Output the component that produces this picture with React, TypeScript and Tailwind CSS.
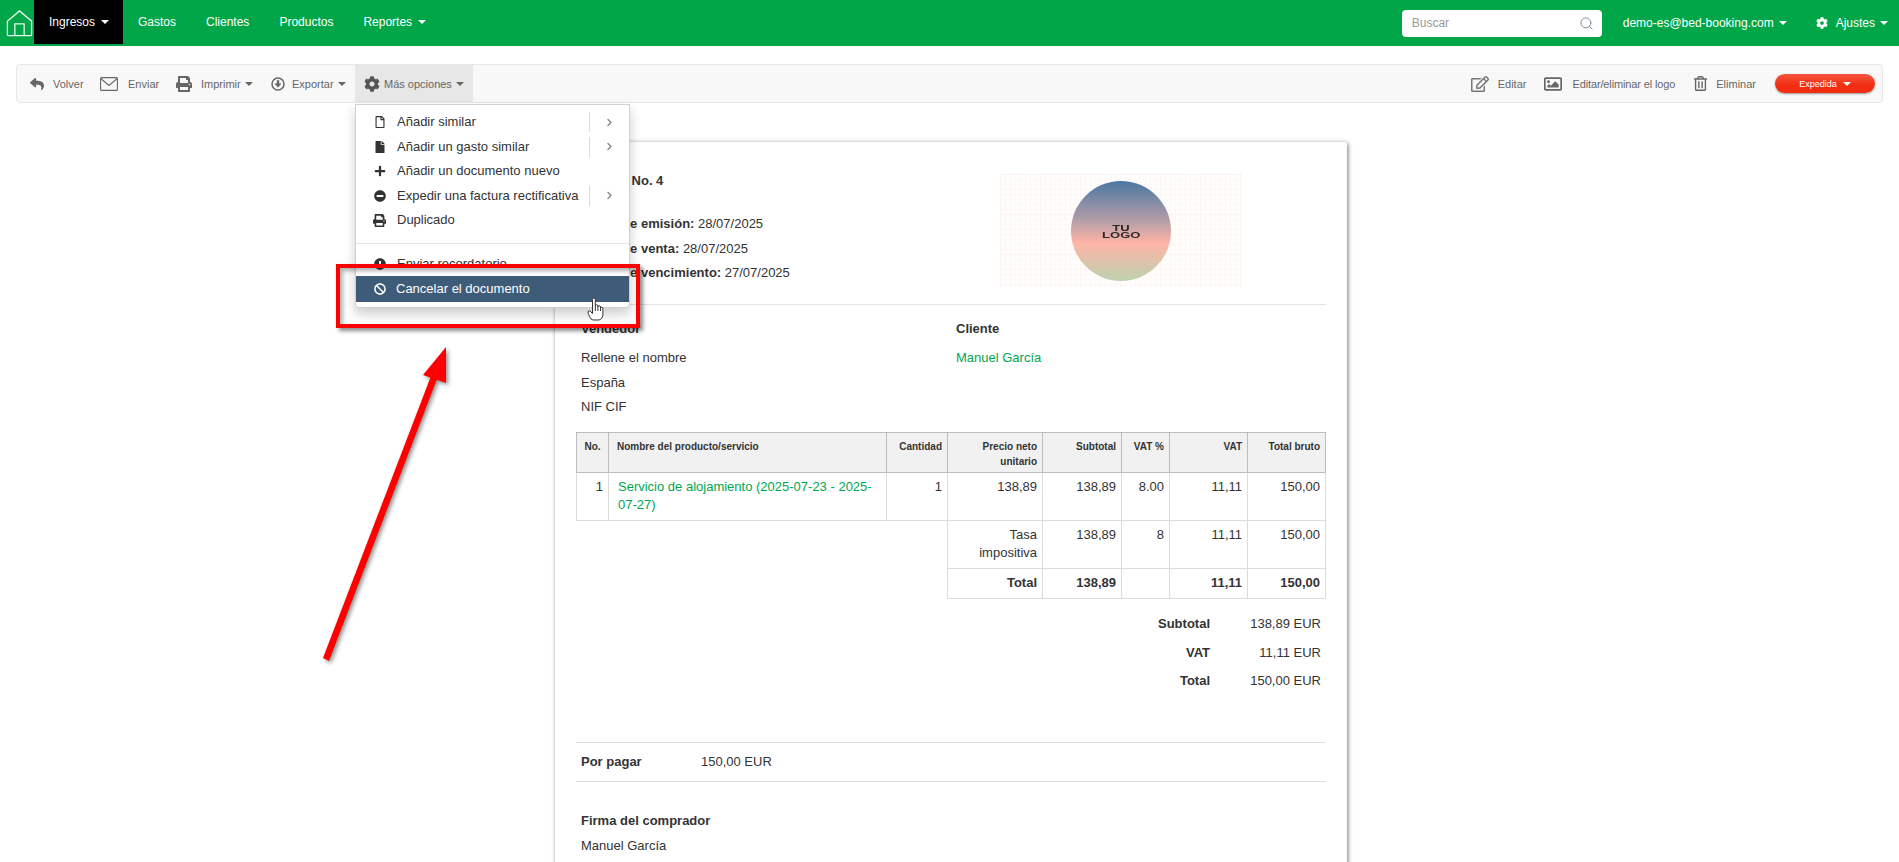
import React from "react";
import { FaReply, FaPrint, FaCog, FaRegFile, FaFile, FaPlus, FaMinusCircle, FaExclamationCircle, FaBan, FaRegEdit, FaRegImage, FaRegTrashAlt, FaChevronRight } from "react-icons/fa";
import { Search } from "lucide-react";

const Caret = ({ className = "" }: { className?: string }) => (
  <span className={"inline-block w-0 h-0 border-x-[4px] border-x-transparent border-t-[4px] " + className} />
);

const NavLink = ({ label, caret, active }: { label: string; caret?: boolean; active?: boolean }) => (
  <a className={"mb-[2px] flex h-[44px] items-center gap-[6px] px-[15px] " + (active ? "w-[89px] bg-black" : "")}>
    <span>{label}</span>
    {caret && <Caret className="border-t-white" />}
  </a>
);

const Tool = ({ icon, label, caret, w, active }: { icon: React.ReactNode; label: string; caret?: boolean; w: string; active?: boolean }) => (
  <div className={"flex h-full items-center " + w + (active ? " bg-[#e7e7e7]" : "")}>
    {icon}
    <span>{label}</span>
    {caret && <Caret className="ml-[4px] border-t-[#666]" />}
  </div>
);

const MenuRow = ({ icon, label, sub, active }: { icon: React.ReactNode; label: string; sub?: boolean; active?: boolean }) => (
  <div className={"flex items-center whitespace-nowrap " + (active ? "h-[26px] bg-[#3e5b78] text-white" : "h-[24.5px]")}>
    <span className="flex w-[41px] justify-end pr-[11px]">{icon}</span>
    <span className={active ? "-ml-[1px]" : ""}>{label}</span>
    {sub && (
      <span className="ml-auto flex h-[20px] w-[40px] items-center justify-center border-l border-[#dcdcdc]">
        <FaChevronRight className="text-[9px] text-[#8a8a8a]" />
      </span>
    )}
  </div>
);

const th = "border border-[#bdbdbd] bg-[#f1f1f1] px-[5px] pt-[6px] pb-[3px] align-top font-bold text-[10px] leading-[15px] text-[#333]";
const td = "border border-[#dcdcdc] px-[5px] pt-[5px] pb-[6px] align-top text-right";

export default function App() {
  return (
    <div className="relative h-[862px] overflow-hidden bg-white [font-family:Liberation_Sans,Arial,sans-serif] text-[13px] leading-[18px] text-[#333]">
      <header className="flex h-[46px] items-start bg-[#00a648] text-[12px] text-white">
        <div className="flex h-[46px] w-[34px] items-center justify-end pr-[1px]">
          <svg width="27" height="28" viewBox="0 0 29 29" fill="none" stroke="#e6f7ec" strokeWidth="1.4">
            <path d="M1.5 12.5 14.5 1.5 27.5 12.5V27a1 1 0 0 1-1 1h-24a1 1 0 0 1-1-1Z" />
            <path d="M9.5 28V15.5h10V28" />
          </svg>
        </div>
        <NavLink label="Ingresos" caret active />
        <NavLink label="Gastos" />
        <NavLink label="Clientes" />
        <NavLink label="Productos" />
        <NavLink label="Reportes" caret />
        <div className="ml-auto flex h-[46px] items-center">
          <div className="relative h-[27px] w-[200px]">
            <input placeholder="Buscar" className="h-full w-full rounded-[4px] bg-white pl-[10px] text-[12px] text-[#333] outline-none placeholder:text-[#9a9a9a]" />
            <Search size={15} strokeWidth={1.5} className="absolute right-[8px] top-[6px] text-[#7b8aa0]" />
          </div>
          <span className="ml-[21px]">demo-es@bed-booking.com</span>
          <Caret className="ml-[5px] border-t-white" />
          <FaCog className="ml-[29px] text-[12px]" />
          <span className="ml-[8px]">Ajustes</span>
          <Caret className="ml-[5px] mr-[11px] border-t-white" />
        </div>
      </header>

      <div className="mx-[16px] mt-[18px] flex h-[39px] items-center rounded-[4px] border border-[#e7e7e7] bg-[#f8f8f8] text-[11px] text-[#666]">
        <Tool w="w-[83px] pl-[13px]" icon={<FaReply className="mr-[9px] text-[14px] text-[#666]" />} label="Volver" />
        <Tool w="w-[76px]" icon={<svg className="mr-[10px]" width="18" height="14" viewBox="0 0 18 14" fill="none" stroke="#666" strokeWidth="1.1"><rect x="0.6" y="0.6" width="16.8" height="12.8" rx="1" /><path d="M0.8 1.5 9 8.5 17.2 1.5" /></svg>} label="Enviar" />
        <Tool w="w-[95px]" icon={<FaPrint className="mr-[9px] text-[16px] text-[#666]" />} label="Imprimir" caret />
        <Tool w="w-[84px]" icon={<svg className="mr-[7px]" width="14" height="14" viewBox="0 0 14 14" fill="none" stroke="#666"><circle cx="7" cy="7" r="6" strokeWidth="1.5" /><path d="M7 3.2V7.5" strokeWidth="2.4" /><path d="M3.9 6.8H10.1L7 10.3Z" fill="#666" strokeWidth="0.5" /></svg>} label="Exportar" caret />
        <Tool w="w-[118px] pl-[9px]" active icon={<FaCog className="mr-[4px] text-[16px] text-[#555]" />} label="Más opciones" caret />
        <div className="ml-auto flex h-full items-center">
          <FaRegEdit className="text-[18px] text-[#777]" />
          <span className="ml-[9px]">Editar</span>
          <FaRegImage className="ml-[18px] text-[18px] text-[#666]" />
          <span className="ml-[10px] tracking-[-0.13px]">Editar/eliminar el logo</span>
          <FaRegTrashAlt className="ml-[18px] text-[15px] text-[#666]" />
          <span className="ml-[8px]">Eliminar</span>
          <div className="ml-[19px] mr-[7px] flex h-[19px] w-[100px] items-center justify-center gap-[6px] rounded-full bg-[linear-gradient(#f6553f,#f32d12_60%)] text-[9px] text-white shadow-[0_1px_2px_rgba(0,0,0,0.4)]">
            <span>Expedida</span>
            <Caret className="border-t-white" />
          </div>
        </div>
      </div>

      <main className="ml-[555px] mt-[39px] w-[792px] rounded-t-[2px] px-[21px] pt-[30px] pb-[40px] shadow-[1px_1px_4px_rgba(0,0,0,0.55)]">
        <div className="flex h-[133px] items-start justify-between border-b border-[#e2e2e2] px-[5px]">
          <div>
            <div className="h-[43px] font-bold">Factura No. 4</div>
            <div className="h-[24.5px]"><b>Fecha de emisión:</b> 28/07/2025</div>
            <div className="h-[24.5px]"><b>Fecha de venta:</b> 28/07/2025</div>
            <div className="h-[24.5px]"><b>Fecha de vencimiento:</b> 27/07/2025</div>
          </div>
          <div className="mr-[79px] mt-[2px] flex h-[113px] w-[242px] items-center justify-center bg-[#fffefd] bg-[linear-gradient(#fbf3f0_1px,transparent_1px),linear-gradient(90deg,#fbf3f0_1px,transparent_1px),linear-gradient(#fdf8f6_1px,transparent_1px),linear-gradient(90deg,#fdf8f6_1px,transparent_1px)] bg-[length:40px_40px,40px_40px,5px_5px,5px_5px]">
            <div className="flex h-[100px] w-[100px] flex-col items-center justify-center rounded-full bg-[linear-gradient(#4a78a2,#b59ea8_40%,#ffb4a6_62%,#bcd3af)] pt-[3px] text-[9px] font-black leading-[7.5px] text-[#2a2a2a]">
              <span className="scale-x-[1.45]">TU</span>
              <span className="scale-x-[1.45]">LOGO</span>
            </div>
          </div>
        </div>

        <div className="flex h-[127px] px-[5px] pt-[15px]">
          <div className="w-[375px]">
            <div className="mb-[11px] font-bold">Vendedor</div>
            <div className="h-[24.5px]">Rellene el nombre</div>
            <div className="h-[24.5px]">España</div>
            <div>NIF CIF</div>
          </div>
          <div>
            <div className="mb-[11px] font-bold">Cliente</div>
            <div className="text-[#00a651]">Manuel García</div>
          </div>
        </div>

        <table className="w-[749px] table-fixed border-collapse">
          <colgroup>
            <col className="w-[32px]" />
            <col className="w-[278px]" />
            <col className="w-[61px]" />
            <col className="w-[95px]" />
            <col className="w-[79px]" />
            <col className="w-[48px]" />
            <col className="w-[78px]" />
            <col className="w-[78px]" />
          </colgroup>
          <thead>
            <tr className="h-[40px]">
              <th className={th + " text-center"}>No.</th>
              <th className={th + " text-left pl-[8px]"}>Nombre del producto/servicio</th>
              <th className={th + " text-right"}>Cantidad</th>
              <th className={th + " text-right"}>Precio neto unitario</th>
              <th className={th + " text-right"}>Subtotal</th>
              <th className={th + " text-right"}>VAT %</th>
              <th className={th + " text-right"}>VAT</th>
              <th className={th + " text-right"}>Total bruto</th>
            </tr>
          </thead>
          <tbody>
            <tr className="h-[48px]">
              <td className={td}>1</td>
              <td className={td + " !text-left !pl-[9px] text-[#00a651]"}>Servicio de alojamiento (2025-07-23 - 2025-07-27)</td>
              <td className={td}>1</td>
              <td className={td}>138,89</td>
              <td className={td}>138,89</td>
              <td className={td}>8.00</td>
              <td className={td}>11,11</td>
              <td className={td}>150,00</td>
            </tr>
            <tr className="h-[48px]">
              <td colSpan={3} />
              <td className={td}>Tasa impositiva</td>
              <td className={td}>138,89</td>
              <td className={td}>8</td>
              <td className={td}>11,11</td>
              <td className={td}>150,00</td>
            </tr>
            <tr className="h-[29px] font-bold">
              <td colSpan={3} />
              <td className={td}>Total</td>
              <td className={td}>138,89</td>
              <td className={td}></td>
              <td className={td}>11,11</td>
              <td className={td}>150,00</td>
            </tr>
          </tbody>
        </table>

        <div className="mt-[16px] flex flex-col items-end pr-[5px]">
          {[["Subtotal", "138,89 EUR"], ["VAT", "11,11 EUR"], ["Total", "150,00 EUR"]].map(([a, b]) => (
            <div key={a} className="flex h-[28.5px]">
              <b>{a}</b>
              <span className="w-[111px] text-right">{b}</span>
            </div>
          ))}
        </div>

        <div className="mt-[41px] flex h-[40px] items-center border-y border-[#dedede] px-[5px]">
          <b className="w-[120px]">Por pagar</b>
          <span>150,00 EUR</span>
        </div>

        <div className="px-[5px] pt-[30px]">
          <div className="mb-[7px] font-bold">Firma del comprador</div>
          <div>Manuel García</div>
        </div>
      </main>

      <div className="absolute left-[355px] top-[104px] w-[275px] rounded-b-[4px] border border-[#d0d0d0] bg-white pt-[5px] pb-[5px] shadow-[0_6px_12px_rgba(0,0,0,0.2)]">
        <MenuRow sub icon={<FaRegFile className="text-[12px] text-[#333]" />} label="Añadir similar" />
        <MenuRow sub icon={<FaFile className="text-[12px] text-[#333]" />} label="Añadir un gasto similar" />
        <MenuRow icon={<FaPlus className="text-[12px] text-[#333]" />} label="Añadir un documento nuevo" />
        <MenuRow sub icon={<FaMinusCircle className="text-[12px] text-[#333]" />} label="Expedir una factura rectificativa" />
        <MenuRow icon={<FaPrint className="text-[13px] text-[#333]" />} label="Duplicado" />
        <div className="mb-[8px] mt-[10px] border-t border-[#e5e5e5]" />
        <MenuRow icon={<FaExclamationCircle className="text-[12px] text-[#333]" />} label="Enviar recordatorio" />
        <MenuRow active icon={<FaBan className="text-[12px] text-white" />} label="Cancelar el documento" />
      </div>

      <div className="absolute left-[336px] top-[264px] h-[64px] w-[304px] border-[4px] border-[#ff0000] shadow-[3px_3px_4px_rgba(0,0,0,0.45),inset_3px_3px_4px_rgba(0,0,0,0.3)]" />

      <svg className="absolute left-[587px] top-[297px]" width="17" height="24" viewBox="0 0 17 24" fill="#fff" stroke="#333" strokeWidth="1" strokeLinejoin="round">
        <path d="M4 22C3 20 1 17 1 15C1 13.5 3 13.5 4 15L5.5 16.5V2.5A1.4 1.4 0 0 1 8.3 2.5V9A1.3 1.3 0 0 1 10.9 9V10A1.3 1.3 0 0 1 13.5 10V11.5A1.2 1.2 0 0 1 15.9 11.5V17C15.9 20 14.5 23 11 23H7C5.6 23 4.7 22.6 4 22Z" />
        <path d="M8.3 9V14M10.9 10V14M13.5 11.5V14" fill="none" />
      </svg>

      <svg className="absolute left-[315px] top-[340px] drop-shadow-[2px_2px_2px_rgba(0,0,0,0.45)]" width="140" height="325" viewBox="315 340 140 325" fill="#ff0000">
        <path d="M323 658 329 661 437 379 431 376Z" />
        <path d="M446 347 423 375 446 383Z" />
      </svg>
    </div>
  );
}
